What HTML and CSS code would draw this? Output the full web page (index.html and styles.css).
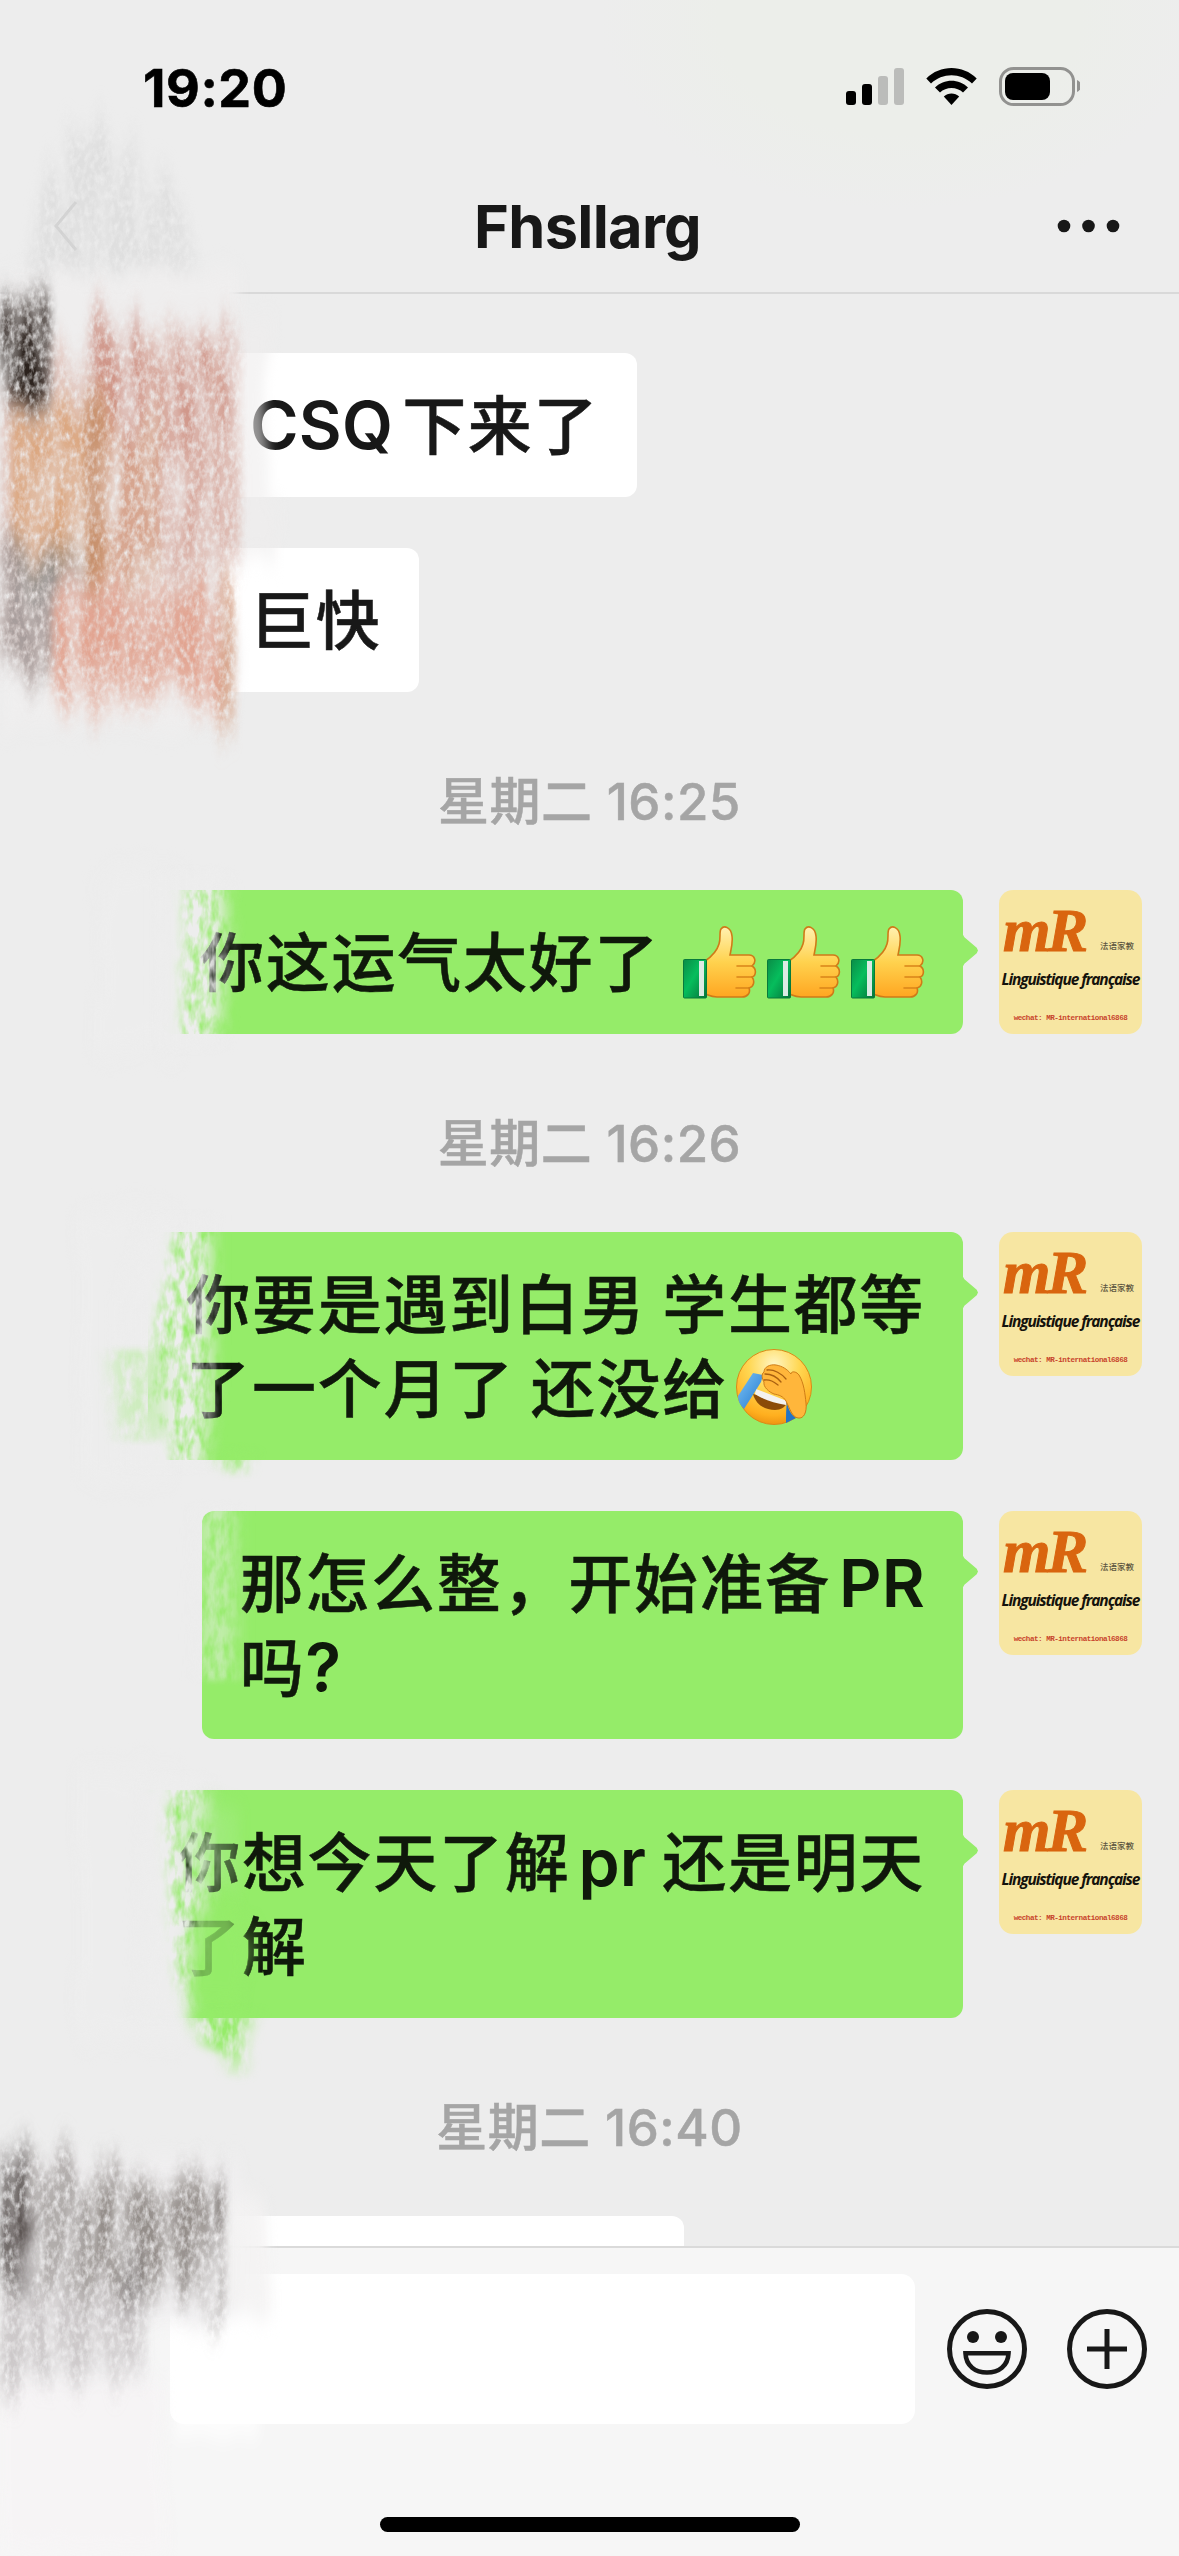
FILE: index.html
```html
<!DOCTYPE html>
<html lang="zh-CN">
<head>
<meta charset="utf-8">
<title>Fhsllarg</title>
<link rel="stylesheet" href="styles.css">
</head>
<body>
<svg class="defs" width="0" height="0" aria-hidden="true">
  <defs>
    <linearGradient id="skin" x1="0" y1="0" x2="0" y2="1">
      <stop offset="0" stop-color="#fff1b0"/><stop offset=".5" stop-color="#ffd24e"/><stop offset="1" stop-color="#ffa621"/>
    </linearGradient>
    <linearGradient id="cuff" x1="0" y1="0" x2="1" y2="1">
      <stop offset="0" stop-color="#0a8d47"/><stop offset=".45" stop-color="#06bd5c"/><stop offset="1" stop-color="#06733a"/>
    </linearGradient>
    <radialGradient id="face" cx=".5" cy=".2" r=".85">
      <stop offset="0" stop-color="#fff6c4"/><stop offset=".4" stop-color="#ffd752"/><stop offset=".8" stop-color="#ffaf1f"/><stop offset="1" stop-color="#e88a0c"/>
    </radialGradient>
    <linearGradient id="tear" x1="0" y1="0" x2="1" y2="1">
      <stop offset="0" stop-color="#7cc4f5"/><stop offset="1" stop-color="#2277cf"/>
    </linearGradient>
    <symbol id="thumb" viewBox="0 0 74 73">
      <path d="M22 35C28 31 34 25 36 18C38 12 36 6 38 3C41-1 48 1 49 10C50 17 48 24 47 29H66C72 29 74 36 69 40C74 43 73 50 69 51C72 55 71 61 66 62C68 67 64 71 59 71H34C28 71 25 69 22 68Z" fill="url(#skin)" stroke="#cf7a18" stroke-width="1.6"/>
      <path d="M54 40H69M54 51H69M53 62H66" fill="none" stroke="#d98418" stroke-width="1.6" stroke-linecap="round"/>
      <rect x=".5" y="33.500" width="23" height="38.500" rx="1" fill="url(#cuff)" stroke="#087a3c"/>
      <rect x="16" y="35" width="5" height="35" fill="#dcebe4"/>
    </symbol>
    <symbol id="facepalm" viewBox="0 0 76 76">
      <circle cx="38" cy="38" r="37.500" fill="url(#face)" stroke="#d98a18"/>
      <path d="M17 45C20 56 29 61 39 61C45 61 49 58 51 54L50 53Z" fill="#8b4b08"/>
      <path d="M20 40L51 52L50 56C38 54 26 50 19 45Z" fill="#f4f2ef"/>
      <path d="M17 24L27 26L25 33L8 60C4 56 2 52 2 47Z" fill="url(#tear)"/>
      <path d="M51 53C52 60 55 66 60 69L50 74C50 67 50 60 51 53Z" fill="#2474c6"/>
      <path d="M28 23C28 18 34 15 40 16C46 17 51 20 55 25C55 22 60 22 63 26C68 34 69 45 70 54C71 63 68 70 62 69C56 68 54 60 50 52C47 47 43 46 38 45C33 43 27 38 28 33C26 30 25 25 28 23Z" fill="#ffb63b" stroke="#cf7c16" stroke-width="1"/>
      <path d="M31 21C38 20 46 25 50 30M29 25C36 25 41 28 45 33M28 31C34 30 38 33 42 36" fill="none" stroke="#a85f10" stroke-width="1.300" stroke-linecap="round"/>
    </symbol>
  </defs>
</svg>

<div class="app">
  <header class="header">
    <div class="status">
      <span class="clock">19:20</span>
      <svg class="status-icons" viewBox="0 0 240 44" width="240" height="44">
        <g fill="#000"><rect x="6" y="25" width="10" height="14" rx="3"/><rect x="22" y="18" width="10" height="21" rx="3"/></g>
        <g fill="#bbbcba"><rect x="38" y="10" width="10" height="29" rx="3"/><rect x="54" y="2" width="10" height="37" rx="3"/></g>
        <path d="M86.300 12.500C100 -1.500 123 -1.500 136.700 12.500L132 17.500C120.500 6.500 102.500 6.500 91 17.500Z"/>
        <path d="M95 21.500C104 12.500 119 12.500 128 21.500L123 26.500C117 20.500 106 20.500 100 26.500Z"/>
        <path d="M103.800 30.500C108 26.500 115 26.500 119.200 30.500L111.500 39Z"/>
        <rect x="160.500" y="2.500" width="73" height="36" rx="13" fill="none" stroke="#929290" stroke-width="3"/>
        <rect x="165" y="7" width="45" height="27" rx="8"/>
        <path d="M237 14C242.500 16 242.500 23.500 237 26Z" fill="#929290"/>
      </svg>
    </div>
    <div class="titlebar">
      <svg class="back" viewBox="0 0 24 52" width="24" height="52"><path d="M22 2L2 26L22 50" fill="none" stroke="#d2d2d2" stroke-width="3"/></svg>
      <h1 class="title">Fhsllarg</h1>
      <svg class="more" viewBox="0 0 64 14" width="64" height="14"><g fill="#181818"><circle cx="7" cy="7" r="6.300"/><circle cx="31.500" cy="7" r="6.300"/><circle cx="56" cy="7" r="6.300"/></g></svg>
    </div>
  </header>

  <main class="chat">
    <div class="row in"><p class="bubble"><span class="latin">CSQ</span>下来了</p></div>
    <div class="row in"><p class="bubble">巨快</p></div>
    <time class="date">星期二 <span>16:25</span></time>
    <div class="row out">
      <p class="bubble">你这运气太好了<svg class="thumb first"><use href="#thumb"/></svg><svg class="thumb"><use href="#thumb"/></svg><svg class="thumb"><use href="#thumb"/></svg></p>
      <div class="avatar"><span class="mr">mR</span><span class="zh">法语家教</span><span class="fr">Linguistique française</span><span class="wx">wechat: MR-international6868</span></div>
    </div>
    <time class="date">星期二 <span>16:26</span></time>
    <div class="row out">
      <p class="bubble">你要是遇到白男<i class="sp"></i>学生都等<br>了一个月了<i class="sp"></i>还没给<svg class="palm"><use href="#facepalm"/></svg></p>
      <div class="avatar"><span class="mr">mR</span><span class="zh">法语家教</span><span class="fr">Linguistique française</span><span class="wx">wechat: MR-international6868</span></div>
    </div>
    <div class="row out">
      <p class="bubble">那怎么整，开始准备<span class="latin lead">PR</span><br>吗<span class="latin">?</span></p>
      <div class="avatar"><span class="mr">mR</span><span class="zh">法语家教</span><span class="fr">Linguistique française</span><span class="wx">wechat: MR-international6868</span></div>
    </div>
    <div class="row out">
      <p class="bubble">你想今天了解<span class="latin lead">pr</span><i class="sp"></i>还是明天<br>了解</p>
      <div class="avatar"><span class="mr">mR</span><span class="zh">法语家教</span><span class="fr">Linguistique française</span><span class="wx">wechat: MR-international6868</span></div>
    </div>
    <time class="date">星期二 <span>16:40</span></time>
    <div class="row in"><p class="bubble cut"></p></div>
  </main>

  <footer class="composer">
    <div class="inputs">
      <div class="field"></div>
      <svg viewBox="0 0 80 80" width="80" height="80"><circle cx="40" cy="40" r="37.500" fill="none" stroke="#181818" stroke-width="5"/><circle cx="26" cy="28" r="6" fill="#181818"/><circle cx="54" cy="28" r="6" fill="#181818"/><path d="M18.500 44.300H61.500C61 57 51.500 63.500 40 63.500C28.500 63.500 19 57 18.500 44.300Z" fill="none" stroke="#181818" stroke-width="4.600"/></svg>
      <svg viewBox="0 0 80 80" width="80" height="80"><circle cx="40" cy="40" r="37.500" fill="none" stroke="#181818" stroke-width="5"/><path d="M40 20V60M20 40H60" stroke="#181818" stroke-width="5"/></svg>
    </div>
    <div class="home"></div>
  </footer>

  <svg class="chalk" viewBox="0 0 400 2556" width="400" height="2556" aria-hidden="true">
    <defs>
      <filter id="grain" filterUnits="userSpaceOnUse" x="0" y="0" width="400" height="2556" color-interpolation-filters="sRGB">
        <feTurbulence type="fractalNoise" baseFrequency=".045 .003" numOctaves="3" seed="4"/>
        <feColorMatrix values="0 0 0 0 .5  0 1 0 0 0  0 0 0 0 0  0 0 0 0 1" result="cols"/>
        <feDisplacementMap in="SourceGraphic" in2="cols" scale="110" xChannelSelector="R" yChannelSelector="G"/>
        <feGaussianBlur stdDeviation="4 14" result="shape"/>
        <feTurbulence type="fractalNoise" baseFrequency=".2 .12" numOctaves="3" seed="9"/>
        <feColorMatrix values="0 0 0 0 0  0 0 0 0 0  0 0 0 0 0  1.800 0 0 0 -.120" result="fine"/>
        <feTurbulence type="fractalNoise" baseFrequency=".045 .009" numOctaves="2" seed="21"/>
        <feColorMatrix values="0 0 0 0 0  0 0 0 0 0  0 0 0 0 0  1.800 0 0 0 -.050" result="streak"/>
        <feComposite in="shape" in2="fine" operator="in"/>
        <feComposite in2="streak" operator="in"/>
      </filter>
      <filter id="soft" filterUnits="userSpaceOnUse" x="0" y="0" width="400" height="2556" color-interpolation-filters="sRGB">
        <feTurbulence type="fractalNoise" baseFrequency=".06 .008" numOctaves="3" seed="7" result="n"/>
        <feDisplacementMap in="SourceGraphic" in2="n" scale="34" xChannelSelector="R" yChannelSelector="G"/>
        <feGaussianBlur stdDeviation="6 10"/>
      </filter>
      <filter id="edge" filterUnits="userSpaceOnUse" x="0" y="0" width="400" height="2556" color-interpolation-filters="sRGB">
        <feGaussianBlur in="SourceGraphic" stdDeviation="9 3" result="s"/>
        <feTurbulence type="fractalNoise" baseFrequency=".12 .05" numOctaves="3" seed="2"/>
        <feColorMatrix values="0 0 0 0 0  0 0 0 0 0  0 0 0 0 0  2 0 0 0 -.300"/>
        <feComposite in="s" operator="in"/>
      </filter>
    </defs>

    <!-- grey wash over the sender side -->
    <g filter="url(#grain)">
      <path d="M75 120L110 150L180 180L200 290H20L40 200Z" fill="#d6d6d6" opacity=".6"/>
    </g>
    <g filter="url(#soft)">
      <rect x="0" y="270" width="234" height="455" fill="#efeeee"/>
      <path d="M225 320H262L268 500H280V560H225Z" fill="#eeeded" opacity=".6"/>
      <path d="M0 2160H236V2320H150V2420H0Z" fill="#f0eff0"/>
      <path d="M225 2200H268V2310H225Z" fill="#f3f2f2" opacity=".85"/>
      <path d="M0 2380H165V2556H0Z" fill="#f6f4f5"/>
      <path d="M175 2340H260V2440H178Z" fill="#fff" opacity=".7"/>
    </g>

    <!-- portraits scribbled out -->
    <g filter="url(#grain)">
      <rect x="0" y="345" width="225" height="320" fill="#d9ada0" opacity=".55"/>
      <path d="M0 300H50V405H0Z" fill="#3d332f" opacity=".9"/>
      <path d="M0 335H40V395H0Z" fill="#2b221d"/>
      <path d="M90 325H140V440H90ZM175 335H210V430H175ZM222 320H236V420H222Z" fill="#c98b80" opacity=".7"/>
      <path d="M95 335H240V560H95Z" fill="#d08f80" opacity=".5"/>
      <path d="M95 420H160V590H95Z" fill="#d6a283" opacity=".6"/>
    </g>
    <g filter="url(#grain)">
      <path d="M12 405H106V580H12Z" fill="#dba67e"/>
      <path d="M16 410H104V570H16Z" fill="#dba67e"/>
      <path d="M85 410H105V600H85Z" fill="#c8926e"/>
      <path d="M0 550H56V670H0Z" fill="#979191" opacity=".8"/>
      <path d="M20 555H85V595H20Z" fill="#7f8a8a" opacity=".6"/>
    </g>
    <g filter="url(#grain)">
      <path d="M60 590H220V670H60Z" fill="#df9a86"/>
      <path d="M52 600H230V700H52Z" fill="#e3a794" opacity=".85"/>
      <path d="M220 590H234V740H220Z" fill="#cf9270" opacity=".8"/>
    </g>

    <g filter="url(#grain)">
      <path d="M0 2170H225V2290H0Z" fill="#7d7672" opacity=".55"/>
      <path d="M85 2170H222V2280H85Z" fill="#7d7671" opacity=".55"/>
      <path d="M0 2160H28V2280H0Z" fill="#5a5452" opacity=".8"/>
      <path d="M210 2170H222V2310H210Z" fill="#6a635f" opacity=".8"/>
      <path d="M0 2290H145V2375H0Z" fill="#8d8583" opacity=".35"/>
      <path d="M122 2240H142V2300H122Z" fill="#4c4542" opacity=".8"/>
    </g>
    <path d="M18 2215L30 2215L31 2270L22 2300Z" fill="#2f2523" opacity=".7" filter="url(#soft)"/>

    <!-- rubbed bubble edges -->
    <g fill="#ededed">
      <g filter="url(#soft)">
        <path d="M100 870H182V1050H100Z"/>
        <path d="M80 1215H182L170 1290L158 1330L145 1400L172 1440V1480H80Z"/>
        <path d="M80 1770H180L170 1850L166 1900L174 1960L188 2010V2040H80Z"/>
      </g>
      <g filter="url(#edge)">
        <path d="M165 870H222L226 940L216 1050H165Z"/>
        <path d="M150 1215H210V1390L203 1470H120V1300Z"/>
        <path d="M196 1505H235V1680H200Z" opacity=".5"/>
        <path d="M150 1775H203L212 1860L190 2020H140Z"/>
      </g>
    </g>
    <path d="M184 1810H240V1890H184Z" fill="#a9ec8c" opacity=".4" filter="url(#soft)"/>
    <path d="M188 1903H242V2005H190Z" fill="#95ec69" opacity=".75" filter="url(#soft)"/>
    <g filter="url(#edge)" fill="#95ec69">
      <path d="M190 2010H252L242 2040L238 2080L226 2055L206 2045Z"/>
      <path d="M190 2010H250L240 2030L212 2035Z"/>
      <path d="M218 1450H246L240 1476L228 1470Z"/>
      <path d="M110 1350H165V1440H120Z" opacity=".35"/>
    </g>
  </svg>
</div>
</body>
</html>
```
FILE: styles.css
```css
* { box-sizing: border-box; }

body {
  margin: 0;
  background: #ededed;
  color: #181818;
  font-family: Inter, "Noto Sans CJK SC", sans-serif;
}

.defs { display: block; position: absolute; }

.app {
  position: relative;
  display: flex;
  flex-direction: column;
  width: 1179px;
  height: 2556px;
  overflow: hidden;
}

.header {
  height: 294px;
  border-bottom: 2px solid #d9d9d9;
  background: radial-gradient(ellipse 300px 190px at 900px 20px, #eceeea 60%, #ededed 100%);
}

.status {
  display: flex;
  justify-content: space-between;
  align-items: center;
  height: 176px;
  padding: 0 99px 0 143px;
}

.clock {
  color: #000;
  font-size: 52px;
  font-weight: 700;
  letter-spacing: .6px;
  -webkit-text-stroke: .6px #000;
}

.titlebar {
  display: grid;
  grid-template-columns: 200px 1fr 200px;
  align-items: center;
  height: 100px;
  padding: 0 58px 0 54px;
}

.title {
  margin: 0;
  text-align: center;
  font-size: 59.5px;
  font-weight: 680;
  letter-spacing: -.7px;
}

.more { justify-self: end; }

.chat {
  display: flex;
  flex-direction: column;
  gap: 51px;
  height: 1952px;
  padding-top: 59px;
  overflow: hidden;
}

.row { display: flex; flex: none; }
.in { padding-left: 212px; }
.out { justify-content: flex-end; gap: 36px; padding-right: 37px; }

.bubble {
  position: relative;
  min-height: 144px;
  margin: 0;
  padding: 26px 38px 34px;
  border-radius: 12px;
  background: #fff;
  font-family: "Noto Sans CJK SC", sans-serif;
  font-size: 64px;
  font-weight: 500;
  line-height: 84px;
  letter-spacing: 1.7px;
  white-space: nowrap;
  -webkit-text-stroke: .5px currentColor;
}

.out .bubble { background: #95ec69; color: #0f180b; }

.out .bubble::after {
  content: "";
  position: absolute;
  top: 43px;
  right: -15px;
  width: 16px;
  height: 35px;
  background: #95ec69;
  clip-path: polygon(0 0, 15% 12%, 92% 42%, 100% 50%, 92% 58%, 15% 88%, 0 100%);
}

.bubble.cut { width: 472px; }

.latin {
  font-family: Inter, sans-serif;
  font-size: 66px;
  font-weight: 600;
  line-height: 1;
  letter-spacing: .2px;
  -webkit-text-stroke: 0;
}
.in .latin { margin-right: 9px; }
.latin.lead { margin-left: 8px; }
.sp { display: inline-block; width: 16px; }

.thumb {
  width: 74px;
  height: 73px;
  margin-left: 10px;
  vertical-align: -3px;
}
.thumb.first { margin-left: 23px; }

.bubble svg { margin-top: -10px; margin-bottom: -10px; }

.palm {
  width: 76px;
  height: 76px;
  margin-left: 8px;
  vertical-align: -3px;
}

.date {
  flex: none;
  height: 96px;
  padding-top: 23px;
  color: #a5a5a5;
  font-size: 51px;
  font-weight: 500;
  line-height: 72px;
  text-align: center;
  letter-spacing: .5px;
  -webkit-text-stroke: .5px currentColor;
}

.avatar {
  display: grid;
  flex: none;
  grid-template-columns: 93px 1fr;
  grid-template-rows: 76px 34px 34px;
  width: 143px;
  height: 144px;
  border-radius: 14px;
  background: #f7e6a2;
  overflow: hidden;
  white-space: nowrap;
}

.mr {
  align-self: end;
  margin-bottom: 2px;
  padding-left: 4px;
  color: #d9650f;
  font: italic 700 61px/66px "Liberation Serif", serif;
  letter-spacing: -3px;
  -webkit-text-stroke: 1px currentColor;
}

.zh {
  align-self: end;
  padding: 0 0 14px 8px;
  color: #5d5640;
  font: 500 8.5px/14px "Noto Sans CJK SC", sans-serif;
}

.fr {
  grid-column: 1 / -1;
  justify-self: center;
  align-self: start;
  color: #14120c;
  font: italic 700 15.5px/26px "Open Sans", sans-serif;
  letter-spacing: -1.1px;
}

.wx {
  grid-column: 1 / -1;
  justify-self: center;
  padding-top: 12px;
  color: #c8442c;
  font: 700 7.6px/12px "Liberation Mono", monospace;
  letter-spacing: -.5px;
}

.composer {
  display: flex;
  flex-direction: column;
  align-items: center;
  justify-content: space-between;
  height: 310px;
  padding-bottom: 24px;
  border-top: 2px solid #dadada;
  background: #f6f6f6;
}

.inputs {
  display: flex;
  align-items: center;
  gap: 40px;
  align-self: stretch;
  padding: 26px 32px 0 170px;
}

.field {
  flex: 1;
  height: 150px;
  margin-right: -8px;
  border-radius: 14px;
  background: #fff;
}

.home {
  width: 420px;
  height: 15px;
  border-radius: 8px;
  background: #000;
}

.chalk {
  position: absolute;
  top: 0;
  left: 0;
  pointer-events: none;
}
```
